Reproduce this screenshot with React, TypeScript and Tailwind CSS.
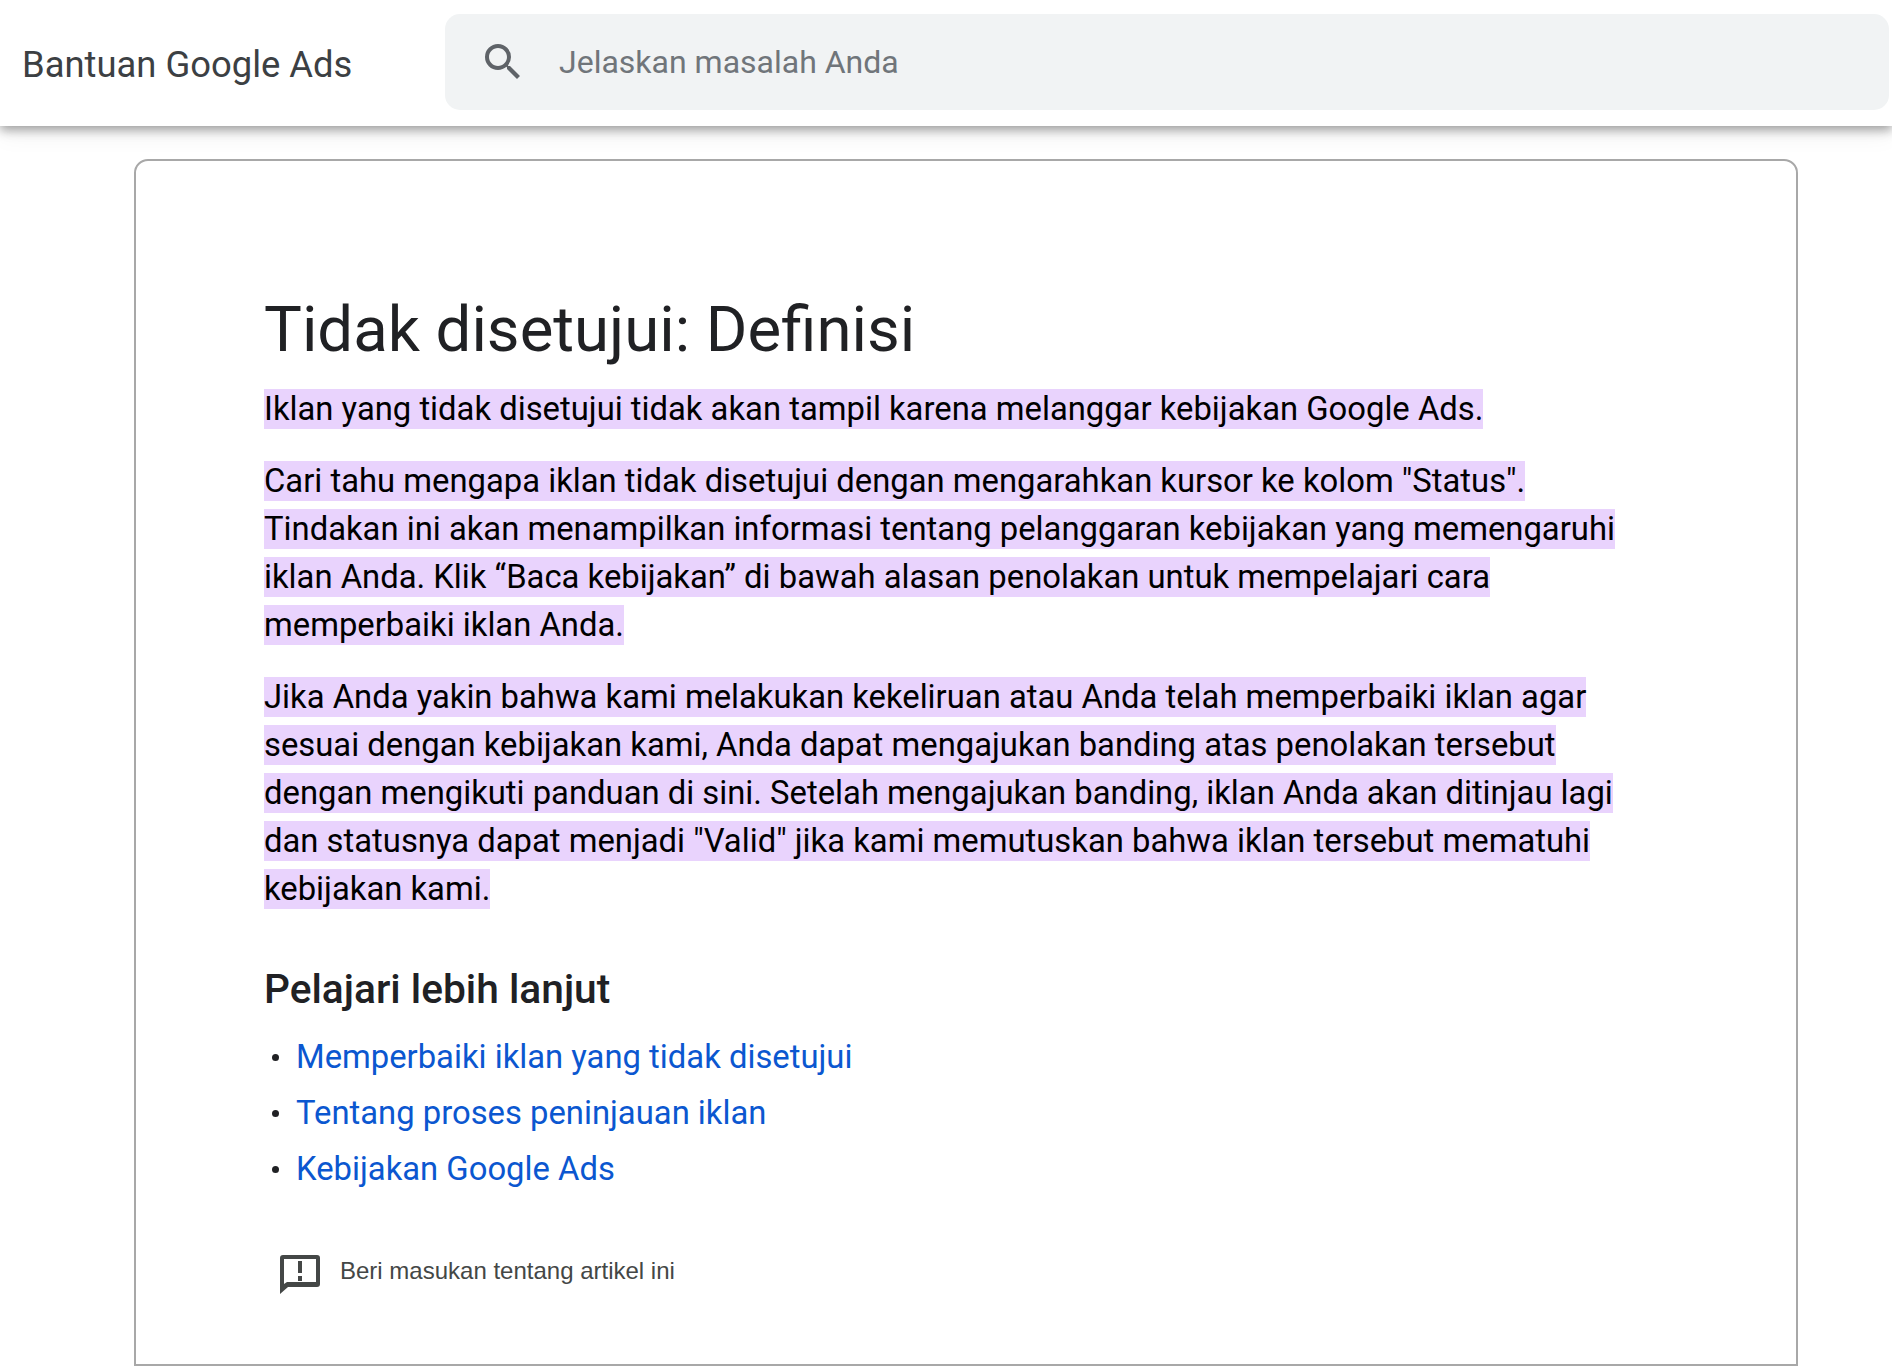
export default function App() {
  const f = { fontFamily: "Roboto, sans-serif" };
  const hl = "bg-[#e9d3fd] py-[1px] [box-decoration-break:clone]";
  return (
    <div className="bg-white h-[1366px] overflow-hidden" style={f}>
      <header className="relative h-[126px] flex items-start pt-[14px] pr-[3px] bg-white shadow-[0_4px_10px_rgba(0,0,0,0.36),0_10px_22px_rgba(0,0,0,0.05)]">
        <div className="w-[445px] shrink-0 pl-[22px] pt-[31px] text-[36.4px] leading-[40px] text-[#3c4043]">Bantuan Google Ads</div>
        <div className="flex-1 h-[96px] rounded-[15px] bg-[#f1f3f4] flex items-center pl-[34px]">
          <svg viewBox="0 0 24 24" className="w-[48px] h-[48px] fill-[#5f6368] shrink-0"><path d="M15.5 14h-.79l-.28-.27A6.471 6.471 0 0 0 16 9.5 6.5 6.5 0 1 0 9.5 16c1.61 0 3.09-.59 4.23-1.57l.27.28v.79l5 4.99L20.49 19l-4.99-5zm-6 0C7.01 14 5 11.99 5 9.5S7.01 5 9.5 5 14 7.01 14 9.5 11.99 14 9.5 14z" /></svg>
          <span className="ml-[32px] text-[32px] text-[#70757a]">Jelaskan masalah Anda</span>
        </div>
      </header>
      <main className="ml-[134px] mr-[94px] mt-[33px] h-[1207px] border-2 border-[#a8a8a8] rounded-t-[14px] pt-[129px] pl-[128px] pr-[155px] text-[32.8px] leading-[48px] text-black">
        <h1 className="text-[63.5px] leading-[80px] text-[#202124] mb-[15px]">Tidak disetujui: Definisi</h1>
        <p className="mb-[24px]"><span className={hl}>Iklan yang tidak disetujui tidak akan tampil karena melanggar kebijakan Google Ads.</span></p>
        <p className="mb-[24px]"><span className={hl}>Cari tahu mengapa iklan tidak disetujui dengan mengarahkan kursor ke kolom "Status". Tindakan ini akan menampilkan informasi tentang pelanggaran kebijakan yang memengaruhi iklan Anda. Klik “Baca kebijakan” di bawah alasan penolakan untuk mempelajari cara memperbaiki iklan Anda.</span></p>
        <p><span className={hl}>Jika Anda yakin bahwa kami melakukan kekeliruan atau Anda telah memperbaiki iklan agar sesuai dengan kebijakan kami, Anda dapat mengajukan banding atas penolakan tersebut dengan mengikuti panduan di sini. Setelah mengajukan banding, iklan Anda akan ditinjau lagi dan statusnya dapat menjadi "Valid" jika kami memutuskan bahwa iklan tersebut mematuhi kebijakan kami.</span></p>
        <h2 className="mt-[52px] mb-[20px] text-[40.7px] leading-[48px] font-medium text-[#202124]">Pelajari lebih lanjut</h2>
        <ul className="flex flex-col gap-[8px] text-[#0b57d0]">
          {["Memperbaiki iklan yang tidak disetujui", "Tentang proses peninjauan iklan", "Kebijakan Google Ads"].map((t) => (
            <li key={t} className="flex items-center">
              <span className="ml-[8px] mr-[17px] w-[7px] h-[7px] rounded-full bg-[#202124]" />
              <a>{t}</a>
            </li>
          ))}
        </ul>
        <div className="mt-[62px] ml-[16px] flex items-start">
          <svg viewBox="0 0 40 39" className="w-[40px] h-[39px] fill-[#444746] shrink-0"><path fillRule="evenodd" d="M3 0h34a3 3 0 0 1 3 3v26a3 3 0 0 1-3 3H8l-8 7V3a3 3 0 0 1 3-3zM4 4v25l3-2h29V4zM18 6h4v12h-4zM18 21h4v5h-4z" /></svg>
          <span className="ml-[20px] text-[24px] leading-[32px] text-[#444746]" style={{ fontFamily: '"Liberation Sans", sans-serif' }}>Beri masukan tentang artikel ini</span>
        </div>
      </main>
    </div>
  );
}
